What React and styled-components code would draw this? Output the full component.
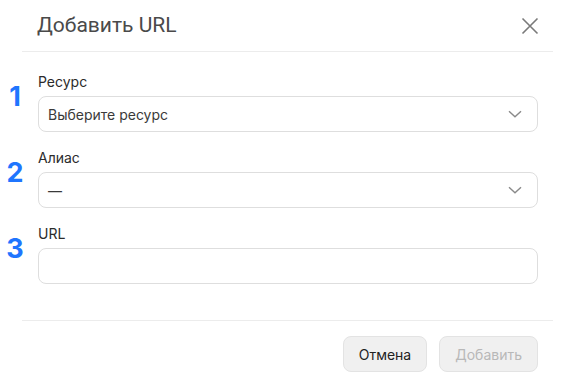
import React from 'react';
import styled, { createGlobalStyle } from 'styled-components';

const GlobalStyle = createGlobalStyle`
  html, body {
    margin: 0;
    padding: 0;
    background: #ffffff;
  }
  body {
    font-family: Inter, "Noto Sans", sans-serif;
  }
`;

const Dialog = styled.div`
  width: 584px;
  height: 383px;
  display: flex;
  flex-direction: column;
  background: #fff;
`;

const Header = styled.div`
  height: 51px;
  margin: 0 31px 0 22px;
  padding: 0 15px 0 15px;
  display: flex;
  align-items: center;
  justify-content: space-between;
  border-bottom: 1px solid #ececec;
`;

const Title = styled.h2`
  margin: 0;
  font-family: Roboto, "Liberation Sans", sans-serif;
  font-size: 21px;
  font-weight: 400;
  color: #4a4a4a;
  line-height: 24px;
  padding-bottom: 2px;
`;

const CloseButton = styled.button`
  width: 18px;
  height: 18px;
  padding: 0;
  border: 0;
  background: none;
  display: flex;
  align-items: center;
  justify-content: center;
  cursor: pointer;
  margin-right: -1px;
`;

const Body = styled.div`
  display: flex;
  flex-direction: column;
  gap: 16px;
  padding: 20px 46px 36px 0;
`;

const Row = styled.div`
  display: flex;
  gap: 8px;
`;

const Num = styled.div`
  width: 30px;
  margin-top: 12px;
  text-align: center;
  font-family: Inter, sans-serif;
  font-size: 27px;
  font-weight: 700;
  line-height: 26px;
  color: #1f75fe;
`;

const Field = styled.div`
  flex: 1;
  display: flex;
  flex-direction: column;
  gap: 4px;
`;

const Label = styled.label`
  font-size: 14px;
  line-height: 20px;
  color: #2b2b2b;
`;

const Box = styled.div`
  height: 34px;
  border: 1px solid #dedede;
  border-radius: 8px;
  display: flex;
  align-items: center;
  justify-content: space-between;
  padding: 0 15px 0 9px;
  font-size: 14px;
  color: #3a3a3a;
  background: #fff;
`;

const Footer = styled.div`
  margin: 0 31px 0 22px;
  border-top: 1px solid #ececec;
  padding: 15px 15px 0 0;
  display: flex;
  justify-content: flex-end;
  gap: 12px;
`;

const Button = styled.button`
  height: 36px;
  padding: 0 15px;
  border: 1px solid #e3e3e3;
  border-radius: 8px;
  background: #f0f0f0;
  font-family: Inter, sans-serif;
  font-size: 14px;
  color: ${(p) => (p.$disabled ? '#b8b8b8' : '#222')};
`;

const Chevron = () => (
  <svg width="14" height="8" viewBox="0 0 14 8" fill="none">
    <path d="M1 1.2l6 5.6 6-5.6" stroke="#8a8a8a" strokeWidth="1.4" />
  </svg>
);

const fields = [
  { n: 1, label: 'Ресурс', value: 'Выберите ресурс', select: true },
  { n: 2, label: 'Алиас', value: '—', select: true },
  { n: 3, label: 'URL', value: '', select: false },
];

export default function App() {
  return (
    <>
      <GlobalStyle />
      <Dialog>
        <Header>
          <Title>Добавить URL</Title>
          <CloseButton aria-label="close">
            <svg width="18" height="18" viewBox="0 0 18 18" fill="none">
              <path d="M1.5 1.5l15 15M16.5 1.5l-15 15" stroke="#7a7a7a" strokeWidth="1.6" />
            </svg>
          </CloseButton>
        </Header>
        <Body>
          {fields.map((f) => (
            <Row key={f.n}>
              <Num>{f.n}</Num>
              <Field>
                <Label>{f.label}</Label>
                <Box>
                  <span>{f.value}</span>
                  {f.select && <Chevron />}
                </Box>
              </Field>
            </Row>
          ))}
        </Body>
        <Footer>
          <Button>Отмена</Button>
          <Button $disabled>Добавить</Button>
        </Footer>
      </Dialog>
    </>
  );
}
